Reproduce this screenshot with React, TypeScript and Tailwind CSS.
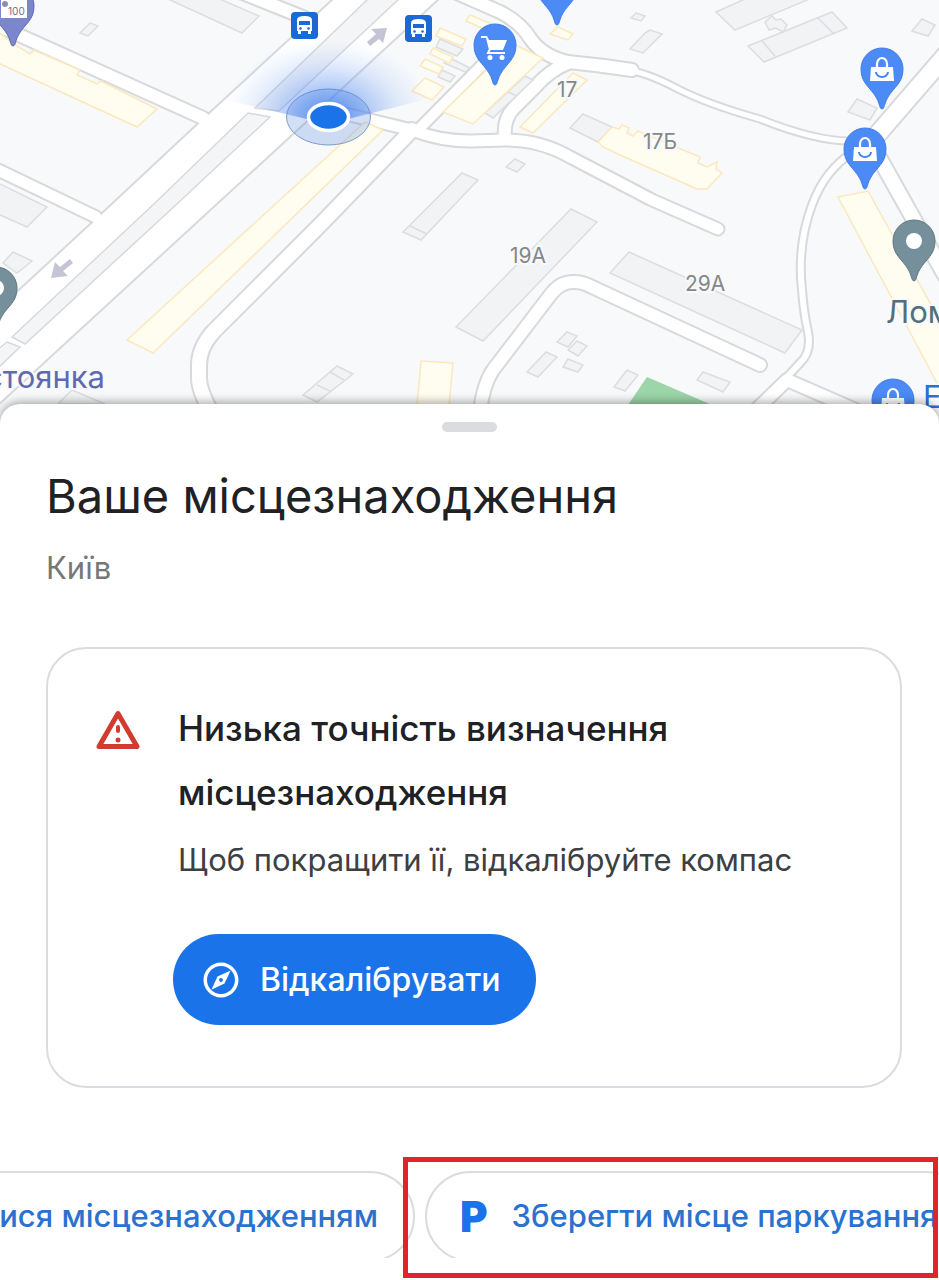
import type { ReactNode } from 'react';
import { MdOutlineExplore } from 'react-icons/md';

const grayBuildings = [
  '90,23 98,26 88,36 80,33',
  '168,-1 215,-3 259,16 242,33',
  '-2,184 0,184 47,207 27,227 -2,214',
  '13,252 32,261 17,273 3,263',
  '72,390 105,404 58,404',
  '440,39 463,49 457,56 436,47',
  '448,57 470,68 465,72 444,63',
  '442,70 455,76 450,82 438,77',
  '525,76 533,80 493,118 485,113',
  '583,114 612,127 598,142 570,128',
  '515,159 525,164 517,172 506,167',
  '462,173 478,180 421,240 403,232',
  '636,13 645,16 641,21 631,18',
  '645,33 650,30 662,34 643,53 630,49',
  '716,12 745,-1 812,-2 735,30',
  '748,46 832,12 847,28 764,62',
  '765,22 772,16 776,20 781,19 787,25 783,32 776,28 769,30',
  '922,19 935,25 928,36 912,31',
  '857,99 877,108 870,120 848,112',
  '571,209 597,222 483,341 456,327',
  '629,252 802,330 785,353 610,273',
  '567,332 577,336 568,347 557,342',
  '577,341 587,346 578,356 568,350',
  '546,352 557,357 538,377 527,372',
  '568,359 583,365 578,372 563,367',
  '627,370 638,375 625,391 614,387',
  '703,372 730,382 723,392 697,380',
  '337,366 353,374 317,402 303,395',
];

const yellowBuildings = [
  '-2,32 17,46 30,54 34,50 80,70 77,75 97,84 101,81 157,109 137,127 -2,63',
  '365,122 383,130 153,353 127,340',
  '470,15 492,24 486,30 466,21',
  '440,28 466,39 462,46 436,36',
  '433,48 453,57 449,63 430,54',
  '425,59 443,67 439,74 420,66',
  '425,78 444,87 432,100 412,91',
  '513,44 543,58 473,124 443,112',
  '573,73 587,80 533,133 520,127',
  '598,142 612,127 619,129 622,125 629,128 627,133 633,136 638,131 700,157 698,163 707,167 717,162 716,169 722,173 707,189 697,189 620,155 603,147',
  '558,27 573,34 568,40 550,34',
  '838,197 868,191 945,330 945,398',
  '421,361 453,363 449,406 417,406',
];

const roads = [
  { d: 'M-10 22L203 118', w: 12 },
  { d: 'M-10 166L96 217', w: 11 },
  { d: 'M240 -8L305 18', w: 12 },
  { d: 'M325 109L412 130Q440 141 470 141L505 140Q540 140 570 157L652 200L718 229', w: 11 },
  { d: 'M412 130L320 225L213 332Q199 348 199 365V378Q199 390 210 410', w: 14 },
  { d: 'M418 130L483 64', w: 10 },
  { d: 'M450 -10L500 12Q520 22 530 38Q542 56 568 62Q600 65 632 70', w: 12 },
  { d: 'M632 71Q650 74 680 90Q710 105 760 119Q815 141 850 141', w: 5 },
  { d: 'M568 63Q550 70 535 87L514 108Q503 119 505 138', w: 12 },
  { d: 'M945 56L876 136', w: 17 },
  { d: 'M876 152L945 275', w: 14 },
  { d: 'M852 153Q825 170 812 205Q797 245 802 290Q804 315 808 332Q812 352 800 363L788 376', w: 6 },
  { d: 'M755 411L787 380L865 414', w: 12 },
  { d: 'M480 412Q483 385 493 370L551 294Q561 281 575 282Q582 282 590 286L760 365', w: 12 },
];

const PIN_PATH =
  'M-21 0a21 21 0 1 1 42 0c0 14-9 18-15 28-3 5-3 8-4.5 11a1.7 1.7 0 0 1-3 0C-3 36-3 33-6 28-12 18-21 14-21 0z';

function Pin({ x, y, fill, stroke, children }: { x: number; y: number; fill: string; stroke: string; children?: ReactNode }) {
  return (
    <g transform={`translate(${x} ${y})`}>
      <path d={PIN_PATH} fill={fill} stroke={stroke} />
      {children}
    </g>
  );
}

function Bag() {
  return (
    <g>
      <path d="M-11-2h22l1 14h-24z" fill="#fff" />
      <path d="M-5-1v-4a5 6 0 0 1 10 0v4" fill="none" stroke="#fff" strokeWidth="2.2" />
      <path d="M-6 3a6 5 0 0 0 12 0" fill="none" stroke="#4286f5" strokeWidth="2" />
    </g>
  );
}

function BusStop({ x, y }: { x: number; y: number }) {
  return (
    <g transform={`translate(${x} ${y})`}>
      <rect width="27" height="27" rx="4" fill="#1a69d4" />
      <path d="M6 8q0-4 7.5-4t7.5 4v11h-1v3h-3v-3h-7v3H7v-3H6z" fill="#fff" />
      <path d="M8 9h11v4H8z" fill="#1a69d4" />
      <circle cx="9.5" cy="16.500" r="1.300" fill="#1a69d4" />
      <circle cx="17.5" cy="16.500" r="1.300" fill="#1a69d4" />
    </g>
  );
}

function MapView() {
  return (
    <svg viewBox="0 0 939 424" className="block w-full font-['Inter',sans-serif]" role="img" aria-label="Мапа">
      <defs>
        <radialGradient id="beam" gradientUnits="userSpaceOnUse" cx="328" cy="117" r="104" gradientTransform="translate(0 29) scale(1 .75)">
          <stop offset="0" stopColor="#1a67e8" stopOpacity=".75" />
          <stop offset=".4" stopColor="#4c86ee" stopOpacity=".4" />
          <stop offset=".7" stopColor="#6a9bf2" stopOpacity=".17" />
          <stop offset="1" stopColor="#8ab4f8" stopOpacity="0" />
        </radialGradient>
      </defs>
      <rect width="939" height="424" fill="#f7f9fb" />

      <g fill="none" stroke="#d8d9dc" strokeLinecap="round" strokeLinejoin="round">
        {roads.map((r) => (
          <path key={r.d} d={r.d} strokeWidth={r.w + 4} />
        ))}
      </g>
      <path d="M334-2L208 114L102 213L-5 312V408L303 125L335 95L440-2z" fill="#fff" stroke="#d8d9dc" strokeWidth="2" />
      <g fill="none" stroke="#fff" strokeLinecap="round" strokeLinejoin="round">
        {roads.map((r) => (
          <path key={r.d} d={r.d} strokeWidth={r.w} />
        ))}
      </g>

      <g fill="#f4f5f7" stroke="#d8d9dc" strokeWidth="1.5">
        <path d="M248 113L270 117L178 203L25 344L12 337L155 203z" />
        <path d="M255 108L369-2H400L279 111z" />
        <path d="M7 342L20 347L-3 369V350z" />
      </g>
      <g fill="#f1f3f4" stroke="#dcdde0" strokeWidth="1.5">
        {grayBuildings.map((p) => (
          <polygon key={p} points={p} />
        ))}
        <path d="M410 226l17 8M762 41l13 15M818 18l16 16M330 372l14 8M317 385l15 7M508 92l9 4" />
      </g>
      <g fill="#fffcf0" stroke="#fbe8bd" strokeWidth="1.5">
        {yellowBuildings.map((p) => (
          <polygon key={p} points={p} />
        ))}
      </g>
      <path d="M647 377L712 405L700 424H620L628 405z" fill="#9bd5a8" />

      <g fill="#c3c4d6">
        <path d="M387 28l-4 15-4-4-9 7-3-4 9-8-5-5z" />
        <path d="M51 278l4-16 5 5 10-8 3 4-10 8 5 5z" />
      </g>

      {/* current position with its heading beam */}
      <ellipse cx="328.5" cy="117" rx="42" ry="28" fill="#4a80dc" fillOpacity=".25" stroke="#7d9dcb" strokeWidth="1" />
      <path d="M328 124L222 99V30H432V98z" fill="url(#beam)" />
      <ellipse cx="328.5" cy="117" rx="20" ry="13.5" fill="#1a73e8" stroke="#fff" strokeWidth="3.500" />

      <BusStop x={291} y={12} />
      <BusStop x={405} y={15} />

      <Pin x={495} y={45} fill="#4c8bf5" stroke="#3f7de6">
        <path d="M-14-9h6l2 4h18l-4 10H-6L-9-7h-5z" fill="#fff" />
        <path d="M-5 4l-2 4h17" fill="none" stroke="#fff" strokeWidth="2" />
        <circle cx="-5" cy="12.5" r="2.500" fill="#fff" />
        <circle cx="7" cy="12.5" r="2.500" fill="#fff" />
      </Pin>
      <Pin x={557} y={-15} fill="#4c8bf5" stroke="#3f7de6" />
      <Pin x={882} y={69} fill="#4c8bf5" stroke="#3f7de6"><Bag /></Pin>
      <Pin x={865} y={149} fill="#4c8bf5" stroke="#3f7de6"><Bag /></Pin>
      <Pin x={893} y={400} fill="#4c8bf5" stroke="#3f7de6"><Bag /></Pin>
      <Pin x={914} y={241} fill="#758f9b" stroke="#5f7782">
        <circle r="8" fill="#fff" />
      </Pin>
      <Pin x={-4} y={288} fill="#758f9b" stroke="#5f7782">
        <circle r="8" fill="#fff" />
      </Pin>
      <Pin x={13} y={6} fill="#7b86cc" stroke="#5f68b0">
        <rect x="-12" y="-7" width="26" height="19" fill="#fff" />
        <circle cx="-8" cy="-2" r="3" fill="#8890b8" />
        <text x="-5" y="9" fontSize="10" fill="#6b7089">100</text>
      </Pin>

      <g fontSize="21" fill="#858789" stroke="#f7f9fb" strokeWidth="4" paintOrder="stroke">
        <text x="557" y="97">17</text>
        <text x="643" y="149">17Б</text>
        <text x="510" y="263">19А</text>
        <text x="685" y="291">29А</text>
      </g>
      <g fontSize="31" stroke="#f7f9fb" strokeWidth="4" paintOrder="stroke">
        <text x="105" y="388" textAnchor="end" fill="#6168b3">Автостоянка</text>
        <text x="886" y="323" fill="#546e7a">Ломбард</text>
        <text x="923" y="408" fill="#2f6fd0">Еко</text>
      </g>
    </svg>
  );
}

function WarningIcon() {
  return (
    <svg viewBox="0 0 44 40" className="mt-[14px] h-10 w-11 shrink-0" aria-hidden="true">
      <path d="M22 3.5L41 36.5H3z" fill="none" stroke="#d13b30" strokeWidth="5" strokeLinejoin="round" />
      <path d="M22 17v4" stroke="#d13b30" strokeWidth="4" strokeLinecap="round" />
      <circle cx="22" cy="30" r="2.5" fill="#d13b30" />
    </svg>
  );
}

export default function App() {
  return (
    <main className="min-h-screen overflow-hidden bg-white font-['Inter',sans-serif] text-[#202124]">
      <MapView />

      <section className="relative -mt-5 rounded-t-[20px] bg-white pb-[22px] shadow-[0_-2px_10px_rgba(0,0,0,0.35)]">
        <div className="flex justify-center pt-[18px]">
          <span className="h-[10px] w-[55px] rounded-full bg-[#dadce0]" />
        </div>

        <header className="px-[46px] pt-8">
          <h1 className="text-[47px] leading-[64px] whitespace-nowrap">Ваше місцезнаходження</h1>
          <p className="mt-5 text-[31px] leading-[40px] text-[#757779]">Київ</p>
        </header>

        <div className="mt-[59px] mr-[37px] ml-[46px] flex gap-[38px] rounded-[40px] border-2 border-[#dadce0] px-12 pt-[47px] pb-[61px]">
          <WarningIcon />
          <div className="min-w-0">
            <h2 className="text-[35px] leading-[64px] font-medium">
              Низька точність визначення
              <br />
              місцезнаходження
            </h2>
            <p className="mt-4 text-[31px] leading-[40px] whitespace-nowrap text-[#3c4043]">
              Щоб покращити її, відкалібруйте компас
            </p>
            <button
              type="button"
              className="mt-[54px] -ml-[5px] flex h-[91px] items-center gap-[18px] rounded-full bg-[#1a73e8] pr-9 pl-[27px] text-[32px] font-medium text-white"
            >
              <MdOutlineExplore className="size-[42px]" aria-hidden="true" />
              Відкалібрувати
            </button>
          </div>
        </div>

        <div className="relative mt-[83px]">
          <div className="flex h-[87px] items-start gap-[10px] overflow-hidden text-[31px] font-medium text-[#2a72d0]">
            <div className="flex w-[415px] shrink-0 justify-end">
              <button type="button" className="h-[91px] shrink-0 rounded-full border-2 border-[#dadce0] px-[35px] whitespace-nowrap">
                Поділитися місцезнаходженням
              </button>
            </div>
            <button
              type="button"
              className="flex h-[91px] shrink-0 items-center gap-6 rounded-full border-2 border-[#dadce0] px-[33px] whitespace-nowrap"
            >
              <span className="text-[42px] font-black text-[#1a73e8]" aria-hidden="true">P</span>
              Зберегти місце паркування
            </button>
          </div>
          <div className="pointer-events-none absolute -top-[14px] right-px -bottom-5 left-[403px] border-[5px] border-[#e0242b]" />
        </div>
      </section>
    </main>
  );
}
